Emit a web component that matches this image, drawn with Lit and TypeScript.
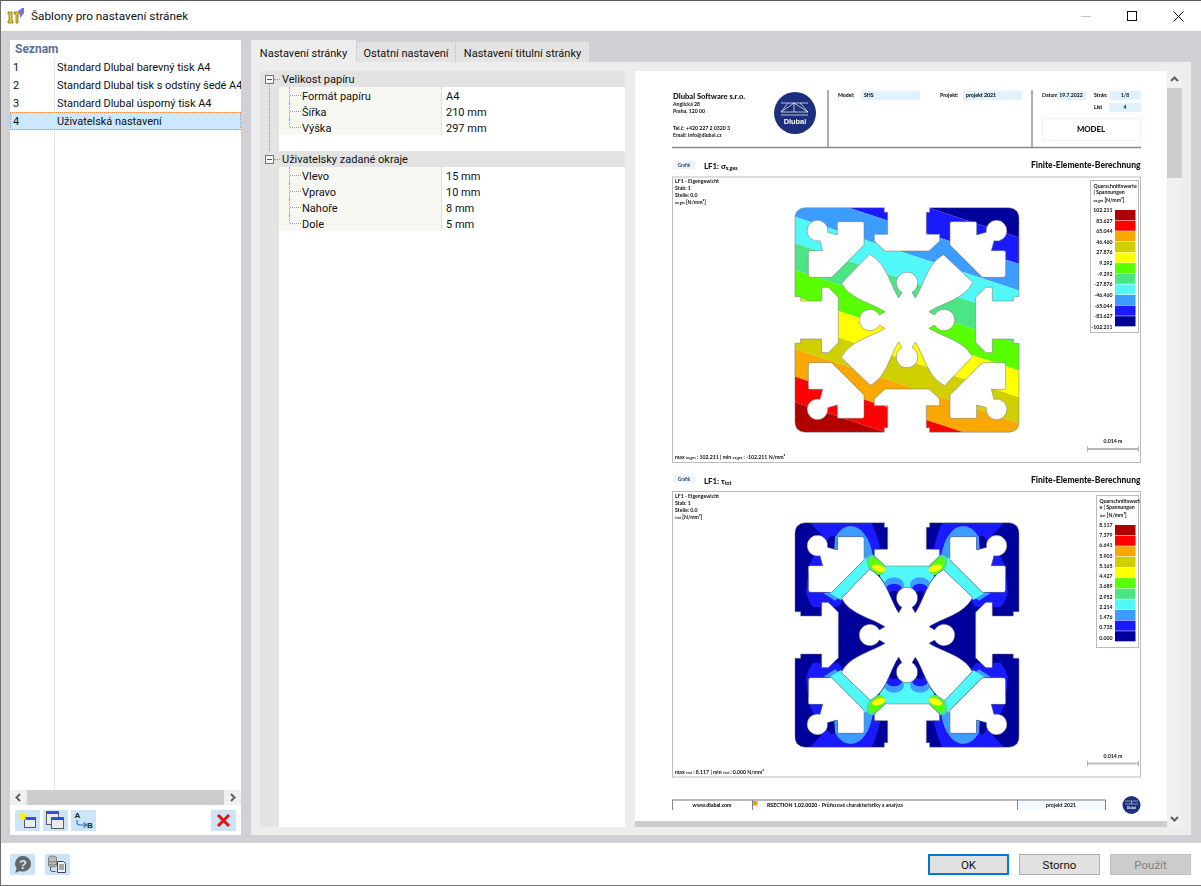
import { LitElement, html, svg, css } from 'lit';
import { customElement } from 'lit/decorators.js';

// profile outline, in 3x units around the section centre
const CX = 381;
const CY = 375;

const OUTER: number[][] = [
  [381, 168], [315, 168], [283, 138], [283, 118], [323, 118], [323, 52], [313, 52], [313, 38],
  [75, 38], [62, 41], [51, 49], [46, 60], [45, 70], [45, 305], [62, 305], [62, 318], [125, 318],
  [125, 277], [145, 277], [175, 307], [175, 375],
];

function outerPath() {
  const mx = (p: number[]) => [2 * CX - p[0], p[1]];
  const my = (p: number[]) => [p[0], 2 * CY - p[1]];
  const all = [
    ...OUTER,
    ...[...OUTER].reverse().map(my),
    ...OUTER.map((p) => mx(my(p))),
    ...[...OUTER].reverse().map(mx),
  ];
  return 'M' + all.map((p) => p.join(' ')).join('L') + 'Z';
}

function hole(sx: number, sy: number) {
  const p = (x: number, y: number) => `${CX + sx * (x - CX)} ${CY + sy * (y - CY)}`;
  const sweep = sx * sy > 0 ? 1 : 0;
  return `M${p(172, 85)}Q${p(172, 80)} ${p(177, 80)}L${p(247, 80)}Q${p(252, 80)} ${p(252, 85)}L${p(252, 150)}L${p(155, 247)}L${p(92, 247)}Q${p(85, 247)} ${p(85, 240)}L${p(85, 172)}Q${p(85, 167)} ${p(90, 167)}L${p(128, 167)}L${p(120, 137)}A31 31 0 1 ${sweep} ${p(143, 112)}L${p(172, 120)}Z`;
}

function star() {
  let d = '';
  for (let k = 0; k < 4; k++) {
    const r = (x: number, y: number) => {
      let a = x;
      let b = y;
      for (let i = 0; i < k; i++) [a, b] = [-b, a];
      return `${CX + a} ${CY + b}`;
    };
    d += `${k ? 'L' : 'M'}${r(-66, 25)}L${r(-83, 15)}A32 32 0 1 1 ${r(-83, -15)}L${r(-66, -25)}C${r(-108, -52)} ${r(-172, -62)} ${r(-196, -110)}L${r(-113, -197)}C${r(-62, -172)} ${r(-52, -108)} ${r(-25, -66)}`;
  }
  return d + 'Z';
}

const PROFILE = [outerPath(), hole(1, 1), hole(-1, 1), hole(1, -1), hole(-1, -1), star()].join('');

const SCALE = ['#b00000', '#ff0000', '#f8a800', '#d0d000', '#ffff00', '#58ff00', '#4ce586', '#50f8f8', '#3c9cff', '#1a1aff', '#00009a'];

const BANDS = [
  { from: -600, to: -94, color: '#00009a' },
  { from: -94, to: -15, color: '#1a1aff' },
  { from: -15, to: 65, color: '#3c9cff' },
  { from: 65, to: 145, color: '#50f8f8' },
  { from: 145, to: 225, color: '#4ce586' },
  { from: 225, to: 305, color: '#58ff00' },
  { from: 305, to: 385, color: '#ffff00' },
  { from: 385, to: 462, color: '#d0d000' },
  { from: 462, to: 545, color: '#f8a800' },
  { from: 545, to: 622, color: '#ff0000' },
  { from: 622, to: 1000, color: '#b00000' },
];

const MIRRORS = [
  '',
  `translate(${2 * CX} 0) scale(-1 1)`,
  `translate(0 ${2 * CY}) scale(1 -1)`,
  `translate(${2 * CX} ${2 * CY}) scale(-1 -1)`,
];

const LEGEND_1 = ['102.211', '83.627', '65.044', '46.460', '27.876', '9.292', '-9.292', '-27.876', '-46.460', '-65.044', '-83.627', '-102.211'];
const LEGEND_2 = ['8.117', '7.379', '6.641', '5.903', '5.165', '4.427', '3.689', '2.952', '2.214', '1.476', '0.738', '0.000'];

@customElement('report-preview')
export class ReportPreview extends LitElement {
  static styles = css`
    :host {
      display: block;
    }
    svg {
      display: block;
      filter: blur(0.25px);
    }
    text {
      font-family: 'Lato', 'DejaVu Sans', sans-serif;
      fill: #111;
      font-size: 5px;
    }
    .name {
      font-size: 7.6px;
      font-weight: 900;
    }
    .head {
      font-size: 8.5px;
      font-weight: 900;
    }
    .title {
      font-size: 7.8px;
      font-weight: 900;
    }
    .small {
      font-size: 5.2px;
      font-weight: 700;
    }
    .b {
      font-weight: 900;
    }
    .tiny {
      font-size: 3.4px;
    }
    .badge {
      fill: #2a4a80;
      font-size: 4.6px;
      font-weight: 700;
    }
    .logo {
      fill: #fff;
      font-family: 'Liberation Sans', sans-serif;
      font-weight: 700;
      font-size: 7.4px;
    }
    .logo-s {
      fill: #fff;
      font-family: 'Liberation Sans', sans-serif;
      font-weight: 700;
      font-size: 3px;
    }
    .mid {
      text-anchor: middle;
    }
    .end {
      text-anchor: end;
    }
  `;

  private stripes() {
    return BANDS.map((band) => {
      const y = (off: number, x: number) => off + 0.33 * (x - 45);
      return svg`<polygon fill=${band.color} points="0,${y(band.from, 0)} 800,${y(band.from, 800)} 800,${y(band.to, 800)} 0,${y(band.to, 0)}"/>`;
    });
  }

  // one quarter of the shear stress plot, painted from the outside in
  private shearQuarter() {
    return svg`
      <path fill="#1a1aff" d="M90 38L275 38Q295 80 302 125L175 290L100 292Q85 275 78 245L88 165L130 80Z"/>
      <ellipse fill="#00009a" cx="157" cy="102" rx="17" ry="24"/>
      <path fill="#3c9cff" d="M165 82Q185 48 212 48Q240 50 255 75Q272 95 280 145L295 170L165 272Q150 262 130 250L155 245Z"/>
      <path fill="#50f8f8" d="M150 250L255 142L290 172L182 270Z"/>
      <path fill="#50f8f8" d="M296 165L381 165L381 240L325 235L300 200Z"/>
      <ellipse fill="#3c9cff" cx="342" cy="225" rx="30" ry="23"/>
      <ellipse fill="#1a1aff" cx="342" cy="238" rx="24" ry="17"/>
      <ellipse fill="#00009a" cx="342" cy="272" rx="20" ry="30"/>
      <ellipse fill="#4ce586" cx="288" cy="165" rx="34" ry="24" transform="rotate(50 288 165)"/>
      <ellipse fill="#58ff00" cx="290" cy="168" rx="28" ry="16" transform="rotate(50 290 168)"/>
      <ellipse fill="#ffff00" cx="296" cy="175" rx="21" ry="10" transform="rotate(18 296 175)"/>
    `;
  }

  private section(y: number, id: string, body: unknown) {
    return svg`
      <g transform="translate(780 ${y}) scale(0.3333)">
        <clipPath id=${id}><path clip-rule="evenodd" d=${PROFILE}/></clipPath>
        <g clip-path="url(#${id})">${body}</g>
        <path d=${PROFILE} fill="none" stroke="#777" stroke-width="1.6" stroke-linejoin="round"/>
      </g>
    `;
  }

  private legend(x: number, y: number, w: number, h: number, lines: string[], sym: string, labels: string[], barTop: number) {
    const step = 10.62;
    return svg`
      <rect x=${x} y=${y} width=${w} height=${h} fill="#fff" stroke="#bbb"/>
      ${lines.map((t, i) => svg`<text class="small" x=${x + 3} y=${y + 7 + i * 6.6}>${t}</text>`)}
      <text class="small" x=${x + 3} y=${y + 21}><tspan class="tiny">${sym}</tspan> [N/mm²]</text>
      ${labels.map((t, i) => svg`<text class="small end" x="1112.5" y=${barTop + 2 + i * step * (labels === LEGEND_1 ? 1 : 0.965)}>${t}</text>`)}
      ${SCALE.map((c, i) => svg`<rect x="1115" y=${barTop + i * step} width="20.5" height=${step - 0.5} fill=${c}/>`)}
    `;
  }

  private frame(top: number, sym: string, max: string, min: string, scaleY: number) {
    return svg`
      <rect x="672.5" y=${top} width="468" height="285.5" fill="#fff" stroke="#bbb"/>
      <text class="small" x="675" y=${top + 6}>LF1 - Eigengewicht</text>
      <text class="small" x="675" y=${top + 13}>Stab: 1</text>
      <text class="small" x="675" y=${top + 20}>Stelle: 0.0</text>
      <text class="small" x="675" y=${top + 27}><tspan class="tiny">${sym}</tspan> [N/mm²]</text>
      <text class="small mid" x="1113" y=${scaleY - 6}>0.014 m</text>
      <path d="M1087.5 ${scaleY - 3}v6M1138.5 ${scaleY - 3}v6M1087.5 ${scaleY - 0.5}h51M1087.5 ${scaleY + 0.5}h51" stroke="#999" stroke-width="0.7" fill="none"/>
      <text class="small" x="675" y=${top + 282}>max <tspan class="tiny">${sym}</tspan> : ${max} | min <tspan class="tiny">${sym}</tspan> : ${min} N/mm²</text>
    `;
  }

  render() {
    return html`
      <svg width="531" height="750" viewBox="635 71 531 750" role="img">
        <rect x="635" y="71" width="531" height="750" fill="#fff"/>

        <text class="name" x="673" y="99">Dlubal Software s.r.o.</text>
        <text class="small" x="673" y="106">Anglická 28</text>
        <text class="small" x="673" y="113">Praha, 120 00</text>
        <text class="small" x="673" y="130">Tel.č: +420 227 2 0320 3</text>
        <text class="small" x="673" y="137">Email: info@dlubal.cz</text>

        <circle cx="795" cy="113" r="21" fill="#1c2f7c"/>
        <path d="M781 103h27M781 112h27M781 115h27M781 112L794 103L808 112M794 103v9M788 103L781 112M800 103L808 112" stroke="#fff" stroke-width="0.7" fill="none"/>
        <text class="logo mid" x="795" y="124">Dlubal</text>

        <path d="M828 90v58M1032 90v58" stroke="#777" stroke-width="1.2"/>
        <path d="M672 147.5h469" stroke="#888" stroke-width="1.4"/>

        <text class="small b" x="838" y="97">Model:</text>
        <rect x="861" y="91" width="59" height="9" fill="#e0f2fd"/>
        <text class="small b" x="864" y="97">SHS</text>
        <text class="small b" x="940" y="97">Projekt:</text>
        <rect x="963" y="91" width="59" height="9" fill="#e0f2fd"/>
        <text class="small b" x="966" y="97">projekt 2021</text>
        <text class="small" x="1042" y="97">Datum</text>
        <rect x="1057" y="91" width="29" height="9" fill="#e0f2fd"/>
        <text class="small mid" x="1071" y="97">19.7.2022</text>
        <text class="small b" x="1094" y="97">Strán:</text>
        <rect x="1109" y="91" width="32" height="9" fill="#e0f2fd"/>
        <text class="small mid" x="1125" y="97">1/8</text>
        <text class="small b" x="1094" y="109">List</text>
        <rect x="1109" y="103" width="32" height="9" fill="#e0f2fd"/>
        <text class="small b mid" x="1125" y="109">4</text>
        <rect x="1042.5" y="118.5" width="98" height="22" fill="#fff" stroke="#e6f4fc"/>
        <text class="title mid" x="1091" y="132">MODEL</text>

        <rect x="673" y="161" width="22" height="8" fill="#eef3fc"/>
        <text class="badge mid" x="684" y="167">Grafik</text>
        <text class="title" x="704" y="169">LF1: σ<tspan class="small b" dy="1">x,ges</tspan></text>
        <text class="head end" x="1140.5" y="168">Finite-Elemente-Berechnung</text>

        ${this.frame(177, 'σx,ges', '102.211', '-102.211', 449)}
        ${this.section(195, 'fig-a', this.stripes())}
        ${this.legend(1090.5, 180.5, 48, 152, ['Querschnittswerte', '| Spannungen'], 'σx,ges', LEGEND_1, 210)}

        <rect x="673" y="475" width="22" height="8" fill="#eef3fc"/>
        <text class="badge mid" x="684" y="481">Grafik</text>
        <text class="title" x="704" y="484">LF1: τ<tspan class="small b" dy="1">tot</tspan></text>
        <text class="head end" x="1140.5" y="483">Finite-Elemente-Berechnung</text>

        ${this.frame(491.5, 'τtot', '8.117', '0.000', 763.5)}
        ${this.section(
          510,
          'fig-b',
          svg`<rect x="0" y="0" width="800" height="800" fill="#00009a"/>${MIRRORS.map(
            (m) => svg`<g transform=${m}>${this.shearQuarter()}</g>`,
          )}`,
        )}
        ${this.legend(1096.5, 495.5, 42, 152, ['Querschnittswert', 'e | Spannungen'], 'τtot', LEGEND_2, 525)}

        <rect x="1018" y="801" width="87" height="9" fill="#f3faff"/>
        <rect x="753" y="801" width="8" height="9" fill="#f3faff"/>
        <rect x="753" y="801" width="4.5" height="4.5" fill="#e8a020"/>
        <path d="M672.5 800v10M752.5 800v10M1017.5 800v10M1105.5 800v10" stroke="#666" stroke-width="0.8"/>
        <path d="M672 800h434" stroke="#777" stroke-width="1"/>
        <text class="small b mid" x="712" y="807">www.dlubal.com</text>
        <text class="small" x="767" y="807"><tspan class="b">RSECTION 1.02.0020</tspan> - Průřezové charakteristiky a analýza</text>
        <text class="small mid" x="1061" y="807">projekt 2021</text>
        <circle cx="1131.5" cy="805" r="9" fill="#1c2f7c"/>
        <path d="M1125 801h13M1125 804h13M1131.5 801v3" stroke="#fff" stroke-width="0.5"/>
        <text class="logo-s mid" x="1131.5" y="809">Dlubal</text>
      </svg>
    `;
  }
}

const chevron = (d: string) => html`<svg width="9" height="9" viewBox="0 0 9 9"><path d=${d} fill="none" stroke="#606060" stroke-width="2"/></svg>`;

const ICON_NEW = html`<svg width="25" height="21" viewBox="0 0 25 21">
  <rect x="9.5" y="7.5" width="11" height="10" fill="#ececec" stroke="#5a5a5a"/>
  <rect x="10" y="8" width="10" height="2" fill="#2a52d8"/>
  <polygon points="8,1 9.4,4.4 13,4.6 10.2,7 11.2,10.6 8,8.6 4.8,10.6 5.8,7 3,4.6 6.6,4.4" fill="#fff200"/>
</svg>`;

const ICON_COPY = html`<svg width="25" height="21" viewBox="0 0 25 21">
  <rect x="3.5" y="1.5" width="12" height="13" fill="#ececec" stroke="#5a5a5a"/>
  <rect x="4" y="2" width="11" height="2" fill="#2a52d8"/>
  <rect x="8.5" y="7.5" width="12" height="11" fill="#ececec" stroke="#5a5a5a"/>
  <rect x="9" y="8" width="11" height="2" fill="#2a52d8"/>
</svg>`;

const ICON_RENAME = html`<svg width="25" height="21" viewBox="0 0 25 21">
  <text x="3.5" y="8" class="ico-text">A</text>
  <text x="16" y="18" class="ico-text">B</text>
  <path d="M6 10v2q0 3 3 3h6M12.5 12.5l3 2.5l-3 2.5" fill="none" stroke="#2a78c8" stroke-width="1.2"/>
</svg>`;

const ICON_DELETE = html`<svg width="25" height="21" viewBox="0 0 25 21">
  <path d="M7 5l11 11M18 5L7 16" stroke="#e81010" stroke-width="3"/>
</svg>`;

const ICON_HELP = html`<svg width="25" height="21" viewBox="0 0 25 21">
  <path d="M13 2a8 7.8 0 0 1 0 15.6q-2 0-3.4-.7L5 19l1.6-4.6A8 7.8 0 0 1 13 2z" fill="#666"/>
  <text x="13" y="14.5" class="ico-help">?</text>
</svg>`;

const ICON_REPORT = html`<svg width="25" height="21" viewBox="0 0 25 21">
  <ellipse cx="7.5" cy="3.5" rx="4" ry="1.5" fill="#aaa" stroke="#666" stroke-width="0.6"/>
  <path d="M3.5 3.5v8q0 1.5 4 1.5t4-1.5v-8M3.5 6.5q0 1.5 4 1.5t4-1.5M3.5 9.5q0 1.5 4 1.5t4-1.5" fill="#bbb" stroke="#666" stroke-width="0.7"/>
  <path d="M5.5 13v3q0 1.5 2 1.5h3" fill="none" stroke="#555"/>
  <path d="M12.5 7.5h6l2 2v9h-8z" fill="#f4f4f4" stroke="#444"/>
  <path d="M14 11h5M14 13h5M14 15h5" stroke="#444" stroke-width="0.9"/>
</svg>`;

const TEMPLATES = ['Standard Dlubal barevný tisk A4', 'Standard Dlubal tisk s odstíny šedé A4', 'Standard Dlubal úsporný tisk A4', 'Uživatelská nastavení'];

const GROUPS = [
  {
    title: 'Velikost papíru',
    rows: [['Formát papíru', 'A4'], ['Šířka', '210 mm'], ['Výška', '297 mm']],
  },
  {
    title: 'Uživatelsky zadané okraje',
    rows: [['Vlevo', '15 mm'], ['Vpravo', '10 mm'], ['Nahoře', '8 mm'], ['Dole', '5 mm']],
  },
];

@customElement('app-root')
export class AppRoot extends LitElement {
  static styles = css`
    :host {
      display: flex;
      flex-direction: column;
      width: 1201px;
      height: 886px;
      box-sizing: border-box;
      background: #fff;
      border-top: 1px solid #5a5a5a;
      border-left: 1px solid #6e6e6e;
      border-bottom: 1px solid #6e6e6e;
      font-family: 'Roboto', 'Liberation Sans', sans-serif;
      font-size: 11px;
      color: #111;
      overflow: hidden;
    }
    svg {
      display: block;
    }
    .ico-text {
      font-family: 'Liberation Sans', sans-serif;
      font-weight: 700;
      font-size: 8px;
      fill: #222;
    }
    .ico-help {
      font-family: 'Liberation Sans', sans-serif;
      font-weight: 700;
      font-size: 13px;
      fill: #cce4f7;
      text-anchor: middle;
    }

    .titlebar {
      height: 30px;
      display: flex;
      align-items: center;
      padding-left: 6px;
      flex: none;
    }
    .caption {
      flex: 1;
      margin-left: 7px;
      font-size: 11.8px;
    }
    .win {
      width: 46px;
      height: 30px;
      display: flex;
      align-items: center;
      justify-content: center;
    }

    .body {
      flex: 1;
      min-height: 0;
      display: flex;
      gap: 10px;
      padding: 9px 10px 8px 9px;
      background: #d1d1d5;
    }

    .list-panel {
      width: 231px;
      flex: none;
      display: flex;
      flex-direction: column;
      background: #fff;
      overflow: hidden;
    }
    .list-head {
      height: 18px;
      line-height: 18px;
      padding-left: 5px;
      font-size: 12px;
      font-weight: 700;
      color: #5b6f97;
      flex: none;
    }
    .list-body {
      flex: 1;
      background: linear-gradient(#e6e6e6, #e6e6e6) 44px 0 / 1px 100% no-repeat;
    }
    .item {
      display: grid;
      grid-template-columns: 44px 1fr;
      height: 18px;
      line-height: 20px;
      padding-left: 3px;
      letter-spacing: -0.05px;
      white-space: nowrap;
      box-sizing: border-box;
    }
    .item.sel {
      background: #cce8ff;
      outline: 1px dotted #e8893a;
      outline-offset: -1px;
    }
    .hscroll {
      height: 15px;
      display: flex;
      flex: none;
      background: #f0f0f0;
    }
    .arrow {
      width: 17px;
      display: flex;
      align-items: center;
      justify-content: center;
      flex: none;
    }
    .thumb {
      flex: 1;
      background: #cdcdcd;
    }
    .list-tools {
      height: 30px;
      flex: none;
      display: flex;
      align-items: flex-start;
      gap: 3px;
      padding: 5px 5px 0;
      box-sizing: border-box;
    }
    .tool {
      width: 25px;
      height: 21px;
      background: #cce4f7;
      flex: none;
    }
    .push {
      margin-left: auto;
    }

    .main {
      flex: 1;
      min-width: 0;
      display: flex;
      flex-direction: column;
    }
    .tabs {
      height: 22px;
      flex: none;
      display: flex;
      align-items: flex-end;
      gap: 1px;
    }
    .tab {
      height: 20px;
      line-height: 23px;
      background: #e3e3e3;
      text-align: center;
      white-space: nowrap;
    }
    .tab.on {
      height: 22px;
      line-height: 27px;
      background: #ededed;
    }
    .tab-body {
      flex: 1;
      min-height: 0;
      display: flex;
      gap: 10px;
      padding: 9px 9px 8px;
      background: #ededed;
    }

    .tree {
      width: 365px;
      flex: none;
      background: linear-gradient(to right, #e3e3e3 19px, #fff 19px);
    }
    .section {
      position: relative;
    }
    .section.linked {
      margin-bottom: 16px;
    }
    .section.linked::before {
      content: '';
      position: absolute;
      left: 9px;
      top: 13px;
      height: 71px;
      border-left: 1px dotted #999;
    }
    .group {
      height: 16px;
      line-height: 18px;
      background: #e3e3e3;
      display: flex;
      align-items: flex-start;
    }
    .box {
      width: 9px;
      height: 9px;
      margin: 4px 0 0 5px;
      box-sizing: border-box;
      border: 1px solid #777;
      background: linear-gradient(#555, #555) center / 5px 1px no-repeat #f4f4f4;
      position: relative;
      z-index: 1;
      flex: none;
    }
    .stub {
      width: 6px;
      margin: 8px 2px 0 0;
      flex: none;
      border-top: 1px dotted #999;
    }
    .row {
      display: grid;
      grid-template-columns: 163px 1fr;
      height: 16px;
      line-height: 19px;
      margin-left: 19px;
    }
    .key {
      position: relative;
      background: #f7f8f2;
      border-right: 1px solid #dedede;
      padding-left: 23px;
      height: 16px;
    }
    .key::before {
      content: '';
      position: absolute;
      left: 10px;
      top: 0;
      height: 100%;
      border-left: 1px dotted #999;
    }
    .row.last .key::before {
      height: 8px;
    }
    .key::after {
      content: '';
      position: absolute;
      left: 11px;
      top: 8px;
      width: 11px;
      border-top: 1px dotted #999;
    }
    .val {
      padding-left: 4px;
      height: 16px;
    }

    .preview {
      flex: 1;
      min-width: 0;
      display: grid;
      grid-template-columns: 532px 15px;
      grid-template-rows: 750px 6px;
      background: #fff;
    }
    .vscroll {
      grid-row: 1 / 3;
      grid-column: 2;
      display: flex;
      flex-direction: column;
      background: #f0f0f0;
    }
    .vscroll .arrow {
      width: 15px;
      height: 17px;
    }
    .vscroll .thumb {
      flex: none;
      height: 90px;
    }
    .vscroll .gap {
      flex: 1;
    }
    .pbar {
      background: #cdcdcd;
    }

    .footer {
      height: 42px;
      flex: none;
      display: flex;
      align-items: center;
      padding: 0 10px 0 9px;
      gap: 10px;
      box-sizing: border-box;
    }
    .btn {
      width: 81px;
      height: 21px;
      box-sizing: border-box;
      border: 1px solid #adadad;
      background: #e1e1e1;
      text-align: center;
      line-height: 20px;
      font-size: 11.5px;
      flex: none;
    }
    .btn.main-btn {
      border: 2px solid #0078d7;
      line-height: 18px;
      margin-left: auto;
    }
    .btn.off {
      background: #cccccc;
      border-color: #bfbfbf;
      color: #838383;
    }
  `;

  private renderSection(group: (typeof GROUPS)[number], linked: boolean) {
    return html`
      <div class="section ${linked ? 'linked' : ''}">
        <div class="group"><span class="box"></span><span class="stub"></span>${group.title}</div>
        ${group.rows.map(
          ([k, v], i) => html`
            <div class="row ${i === group.rows.length - 1 ? 'last' : ''}">
              <div class="key">${k}</div>
              <div class="val">${v}</div>
            </div>
          `,
        )}
      </div>
    `;
  }

  render() {
    return html`
      <div class="titlebar">
        <svg width="17" height="16" viewBox="0 0 17 16">
          <path d="M1 4h4v9h1v2H1v-2h1V6H1z" fill="#f0d020" stroke="#6a6010" stroke-width="0.7"/>
          <path d="M7 4h6v2h-2v9H9V6H7z" fill="#f0d020" stroke="#6a6010" stroke-width="0.7"/>
          <path d="M10 4L15 0h2v5l-4 5V4z" fill="#7a70e0"/>
        </svg>
        <span class="caption">Šablony pro nastavení stránek</span>
        <span class="win">
          <svg width="10" height="10" viewBox="0 0 10 10"><path d="M0 5.5h10" stroke="#c4c4c4"/></svg>
        </span>
        <span class="win">
          <svg width="10" height="10" viewBox="0 0 10 10"><rect x="0.5" y="0.5" width="9" height="9" fill="none" stroke="#111"/></svg>
        </span>
        <span class="win">
          <svg width="11" height="11" viewBox="0 0 11 11"><path d="M0.5 0.5l10 10M10.5 0.5l-10 10" stroke="#111"/></svg>
        </span>
      </div>

      <div class="body">
        <div class="list-panel">
          <div class="list-head">Seznam</div>
          <div class="list-body">
            ${TEMPLATES.map(
              (name, i) => html`
                <div class="item ${i === 3 ? 'sel' : ''}">
                  <span>${i + 1}</span><span>${name}</span>
                </div>
              `,
            )}
          </div>
          <div class="hscroll">
            <span class="arrow">${chevron('M6 1L2.5 4.5L6 8')}</span>
            <span class="thumb"></span>
            <span class="arrow">${chevron('M3 1L6.5 4.5L3 8')}</span>
          </div>
          <div class="list-tools">
            <span class="tool">${ICON_NEW}</span>
            <span class="tool">${ICON_COPY}</span>
            <span class="tool">${ICON_RENAME}</span>
            <span class="tool push">${ICON_DELETE}</span>
          </div>
        </div>

        <div class="main">
          <div class="tabs">
            <span class="tab on" style="width:105px">Nastavení stránky</span>
            <span class="tab" style="width:98px">Ostatní nastavení</span>
            <span class="tab" style="width:133px">Nastavení titulní stránky</span>
          </div>
          <div class="tab-body">
            <div class="tree">
              ${GROUPS.map((g, i) => this.renderSection(g, i === 0))}
            </div>
            <div class="preview">
              <report-preview></report-preview>
              <div class="vscroll">
                <span class="arrow">${chevron('M1 6L4.5 2.5L8 6')}</span>
                <span class="thumb"></span>
                <span class="gap"></span>
                <span class="arrow">${chevron('M1 3L4.5 6.5L8 3')}</span>
              </div>
              <div class="pbar"></div>
            </div>
          </div>
        </div>
      </div>

      <div class="footer">
        <span class="tool">${ICON_HELP}</span>
        <span class="tool">${ICON_REPORT}</span>
        <span class="btn main-btn">OK</span>
        <span class="btn">Storno</span>
        <span class="btn off">Použít</span>
      </div>
    `;
  }
}
